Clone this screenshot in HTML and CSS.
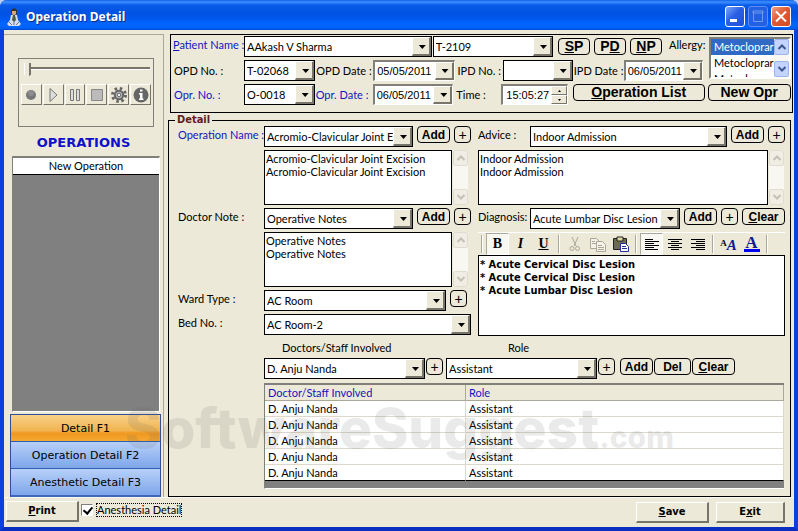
FILE: index.html
```html
<!DOCTYPE html>
<html lang="en">
<head>
<meta charset="utf-8">
<title>Operation Detail</title>
<link rel="stylesheet" href="styles.css">
</head>
<body>
<div class="window">
  <header class="titlebar">
    <svg class="app-icon" viewBox="0 0 14 18" aria-hidden="true">
      <path d="M4 2l3-2 3 2v3l-1 2H5L4 5z" fill="#3a3226"/><path d="M5 3h4v3L7 8 5 6z" fill="#d8a878"/>
      <path d="M4 7h6l1 5 3 4-2 2H2l-2-2 3-4z" fill="#d9dde6"/><path d="M6 7h2l1 5-2 2-2-2z" fill="#4f5a44"/>
      <path d="M2 14l3 3M12 14l-3 3M7 13v4" stroke="#5878a8" fill="none"/>
    </svg>
    <h1 class="title">Operation Detail</h1>
    <div class="window-buttons">
      <button class="wbtn" aria-label="Minimize"><svg viewBox="0 0 18 19"><path d="M4 12h7v3H4z" fill="#fff"/></svg></button>
      <button class="wbtn wbtn-off" aria-label="Maximize" disabled><svg viewBox="0 0 18 19"><path d="M4 4h10v2H4zM4.500 5v9.500h9V5" fill="none" stroke="#6f9af0"/></svg></button>
      <button class="wbtn wbtn-close" aria-label="Close"><svg viewBox="0 0 18 19"><path d="M4 4.500l10 10M14 4.500l-10 10" stroke="#fff" stroke-width="2"/></svg></button>
    </div>
  </header>

  <main class="body">
    <aside class="side">
      <section class="player" aria-label="Recorder">
        <input class="slider" type="range" value="0" aria-label="Position">
        <div class="player-buttons">
          <button aria-label="Record"><svg viewBox="0 0 18 18"><circle cx="9" cy="9" r="5" fill="#777"/><circle cx="9" cy="7" r="3" fill="#8e8e8e"/></svg></button>
          <button aria-label="Play"><svg viewBox="0 0 18 18"><path d="M6 2.500v13L13 9z" fill="#ddd" stroke="#777"/></svg></button>
          <button aria-label="Pause"><svg viewBox="0 0 18 18"><path d="M4.500 3.500h3v11h-3zM10.500 3.500h3v11h-3z" fill="#ddd" stroke="#777"/></svg></button>
          <button aria-label="Stop"><svg viewBox="0 0 18 18"><path d="M3.500 3.500h11v11h-11z" fill="#bbb" stroke="#888"/></svg></button>
          <button aria-label="Settings"><svg viewBox="0 0 18 18"><circle cx="9" cy="9" r="6.500" fill="none" stroke="#666" stroke-width="3" stroke-dasharray="2.500 2.605"/><circle cx="9" cy="9" r="4.200" fill="#bbb" stroke="#666" stroke-width="2"/><circle cx="9" cy="9" r="1.800" fill="#eee" stroke="#666"/></svg></button>
          <button aria-label="Information"><svg viewBox="0 0 18 18"><circle cx="9" cy="9" r="7.500" fill="#666"/><path d="M8 3.500h2.500v2H8zM7 7h3.500v5.500h1V14H7v-1.500h1V8.500H7z" fill="#fff"/></svg></button>
        </div>
      </section>
      <h2 class="side-title">OPERATIONS</h2>
      <div class="op-list"><div class="op-item">New Operation</div></div>
      <nav class="side-nav">
        <button class="nav-btn nav-active">Detail F1</button>
        <button class="nav-btn">Operation Detail F2</button>
        <button class="nav-btn">Anesthetic Detail F3</button>
      </nav>
    </aside>

    <div class="content">
      <section class="patient">
        <div class="patient-upper">
          <div class="patient-rows">
            <div class="name-row">
              <label class="blue" for="pname"><u>P</u>atient Name :</label>
              <span class="combo"><select id="pname"><option>AAkash V Sharma</option></select></span>
              <span class="combo"><select aria-label="Patient number"><option>T-2109</option></select></span>
              <div class="codes">
                <button class="rbtn big"><u>S</u>P</button>
                <button class="rbtn big">P<u>D</u></button>
                <button class="rbtn big"><u>N</u>P</button>
                <span class="allergy-label" id="allergy">Allergy:</span>
              </div>
            </div>
            <div class="field-row">
              <label for="opd">OPD No. :</label>
              <span class="combo"><select id="opd"><option>T-02068</option></select></span>
              <label for="opdd">OPD Date :</label>
              <span class="combo date"><input id="opdd" value="05/05/2011"></span>
              <label class="inset" for="ipd">IPD No. :</label>
              <span class="combo"><select id="ipd"><option></option></select></span>
              <label for="ipdd">IPD Date :</label>
              <span class="combo date"><input id="ipdd" value="06/05/2011"></span>
            </div>
          </div>
          <div class="allergies" role="listbox" aria-labelledby="allergy">
            <div class="allergy-items">
              <div class="selected" role="option" aria-selected="true">Metocloprar</div>
              <div role="option">Metocloprar</div>
              <div role="option">Metocloprar</div>
            </div>
            <div class="scroll scroll-on">
              <button aria-label="Scroll up"><svg viewBox="0 0 10 10"><path d="M1.500 7L5 3.500 8.500 7"/></svg></button>
              <button aria-label="Scroll down"><svg viewBox="0 0 10 10"><path d="M1.500 3L5 6.500 8.500 3"/></svg></button>
            </div>
          </div>
        </div>
        <div class="opr-row">
          <label class="blue" for="opr">Opr. No. :</label>
          <span class="combo"><select id="opr"><option>O-0018</option></select></span>
          <label class="blue" for="oprd">Opr. Date :</label>
          <span class="combo date"><input id="oprd" value="06/05/2011"></span>
          <label class="inset" for="time">Time :</label>
          <span class="time"><input id="time" value="15:05:27">
            <span class="spin"><button aria-label="Later"><svg viewBox="0 0 7 4"><path d="M2 3h3L3.500 1z"/></svg></button><button aria-label="Earlier"><svg viewBox="0 0 7 4"><path d="M2 1h3L3.500 3z"/></svg></button></span>
          </span>
          <div class="opr-buttons">
            <button class="rbtn big list-btn"><u>O</u>peration List</button>
            <button class="rbtn big new-btn">New Opr</button>
          </div>
        </div>
      </section>

      <fieldset class="detail">
        <legend>Detail</legend>
        <div class="halves">
          <div class="left-half">
            <label class="blue" for="opname">Operation Name :</label>
            <div class="line"><span class="combo"><select id="opname"><option>Acromio-Clavicular Joint E</option></select></span><button class="rbtn add">Add</button><button class="rbtn plus">+</button></div>
            <div class="memo">
              <textarea aria-label="Operations">Acromio-Clavicular Joint Excision
Acromio-Clavicular Joint Excision</textarea>
              <div class="scroll"><button aria-label="Scroll up"><svg viewBox="0 0 10 10"><path d="M1.500 7L5 3.500 8.500 7"/></svg></button><button aria-label="Scroll down"><svg viewBox="0 0 10 10"><path d="M1.500 3L5 6.500 8.500 3"/></svg></button></div>
            </div>
            <label for="note">Doctor Note :</label>
            <div class="line"><span class="combo"><select id="note"><option>Operative Notes</option></select></span><button class="rbtn add">Add</button><button class="rbtn plus">+</button></div>
            <div class="memo">
              <textarea aria-label="Notes">Operative Notes
Operative Notes</textarea>
              <div class="scroll"><button aria-label="Scroll up"><svg viewBox="0 0 10 10"><path d="M1.500 7L5 3.500 8.500 7"/></svg></button><button aria-label="Scroll down"><svg viewBox="0 0 10 10"><path d="M1.500 3L5 6.500 8.500 3"/></svg></button></div>
            </div>
            <label for="ward">Ward Type :</label>
            <div class="line ward"><span class="combo"><select id="ward"><option>AC Room</option></select></span><button class="rbtn plus">+</button></div>
            <label for="bed">Bed No. :</label>
            <div class="line"><span class="combo"><select id="bed"><option>AC Room-2</option></select></span></div>
          </div>

          <div class="right-half">
            <div class="line"><label for="advice">Advice :</label><span class="combo"><select id="advice"><option>Indoor Admission</option></select></span><button class="rbtn add">Add</button><button class="rbtn plus">+</button></div>
            <div class="memo memo-wide">
              <textarea aria-label="Advice given">Indoor Admission
Indoor Admission</textarea>
              <div class="scroll"><button aria-label="Scroll up"><svg viewBox="0 0 10 10"><path d="M1.500 7L5 3.500 8.500 7"/></svg></button><button aria-label="Scroll down"><svg viewBox="0 0 10 10"><path d="M1.500 3L5 6.500 8.500 3"/></svg></button></div>
            </div>
            <div class="line"><label for="diag">Diagnosis:</label><span class="combo"><select id="diag"><option>Acute Lumbar Disc Lesion</option></select></span><button class="rbtn add">Add</button><button class="rbtn plus">+</button><button class="rbtn clear"><u>C</u>lear</button></div>
            <div class="editor">
              <div class="toolbar" role="toolbar">
                <span class="sep"></span>
                <button class="tool pressed"><b>B</b></button>
                <button class="tool"><i>I</i></button>
                <button class="tool"><u>U</u></button>
                <span class="sep"></span>
                <button class="tool" aria-label="Cut"><svg viewBox="0 0 16 16" fill="none" stroke="#aca899"><path d="M5 1l4 9M11 1L7 10"/><circle cx="5" cy="12.500" r="2"/><circle cx="10.500" cy="12.500" r="2"/></svg></button>
                <button class="tool" aria-label="Copy"><svg viewBox="0 0 16 16" fill="#f4f2e8" stroke="#aca899"><path d="M.5 2.500h6l3 3v7h-9z"/><path d="M6.500 5.500h6l3 3v7h-9zM8 9.500h4M8 11.500h6M8 13.500h6M2 5.500h3M2 7.500h4"/></svg></button>
                <button class="tool" aria-label="Paste"><svg viewBox="0 0 16 16"><path d="M.5 2.500h13v11H.5z" fill="#6b6a52" stroke="#222"/><path d="M4 1h6v4H4z" fill="#ddd8a8" stroke="#222"/><path d="M7.500 7.500h5l3 3v5h-8z" fill="#fff" stroke="#22309a"/><path d="M9 10.500h4M9 12.500h5" stroke="#22309a"/></svg></button>
                <span class="sep"></span>
                <button class="tool pressed" aria-label="Align left"><svg viewBox="0 0 16 16" stroke="#000"><path d="M1 3.500h8M1 5.500h14M1 7.500h9M1 9.500h14M1 11.500h9M1 13.500h13"/></svg></button>
                <button class="tool" aria-label="Center"><svg viewBox="0 0 16 16" stroke="#000"><path d="M1 3.500h14M4 5.500h8M1 7.500h14M4 9.500h8M1 11.500h14M4 13.500h8"/></svg></button>
                <button class="tool" aria-label="Align right"><svg viewBox="0 0 16 16" stroke="#000"><path d="M1 3.500h14M6 5.500h9M1 7.500h14M6 9.500h9M1 11.500h14M6 13.500h9"/></svg></button>
                <span class="sep"></span>
                <button class="tool font-tool" aria-label="Font"><small>A</small><em>A</em></button>
                <button class="tool color-tool" aria-label="Text colour"><span>A</span></button>
                <span class="sep"></span>
              </div>
              <textarea class="diagnoses" aria-label="Diagnoses">* Acute Cervical Disc Lesion
* Acute Cervical Disc Lesion
* Acute Lumbar Disc Lesion</textarea>
            </div>
          </div>
        </div>

        <div class="staff">
          <div class="staff-pick">
            <label class="staff-label" for="doc">Doctors/Staff Involved</label>
            <label class="role-label" for="role">Role</label>
            <div class="pick"><span class="combo"><select id="doc"><option>D. Anju Nanda</option></select></span><button class="rbtn plus">+</button></div>
            <div class="pick"><span class="combo"><select id="role"><option>Assistant</option></select></span><button class="rbtn plus">+</button></div>
            <div class="pick-buttons"><button class="rbtn add">Add</button><button class="rbtn del">Del</button><button class="rbtn clear"><u>C</u>lear</button></div>
          </div>
          <div class="grid">
            <table>
              <thead><tr><th>Doctor/Staff Involved</th><th>Role</th></tr></thead>
              <tbody>
                <tr><td>D. Anju Nanda</td><td>Assistant</td></tr>
                <tr><td>D. Anju Nanda</td><td>Assistant</td></tr>
                <tr><td>D. Anju Nanda</td><td>Assistant</td></tr>
                <tr><td>D. Anju Nanda</td><td>Assistant</td></tr>
                <tr><td>D. Anju Nanda</td><td>Assistant</td></tr>
              </tbody>
            </table>
          </div>
        </div>
      </fieldset>
    </div>
  </main>

  <footer class="footer">
    <button class="xbtn"><u>P</u>rint</button>
    <input type="checkbox" class="check" id="anes" checked>
    <label class="anes" for="anes">Anesthesia Detail</label>
    <div class="footer-right">
      <button class="xbtn"><u>S</u>ave</button>
      <button class="xbtn exit">E<u>x</u>it</button>
    </div>
  </footer>
  <div class="watermark" aria-hidden="true">SoftwareSuggest<span>.com</span></div>
</div>
</body>
</html>
```
FILE: styles.css
```css
* { box-sizing: border-box; }
body {
  margin: 0;
  background: #b9cdf2;
  font: 11px/13px Lato, "Liberation Sans", sans-serif;
  color: #000;
}
button, input, select, textarea { font: inherit; color: inherit; margin: 0; border-radius: 0; }
button { padding: 0; }
h1, h2 { margin: 0; }
svg { display: block; }

.window {
  position: relative;
  min-height: 100vh;
  display: flex;
  flex-direction: column;
  background: #ece9d8;
  border: solid #0a3fe0;
  border-width: 0 4px 4px;
  border-bottom-color: #0a2fc0;
  border-radius: 7px 7px 0 0;
}
.titlebar {
  display: flex;
  align-items: center;
  height: 30px;
  margin: 0 -4px;
  padding: 3px 7px 0;
  gap: 5px;
  background: linear-gradient(#1260e8 0, #3c90ff 2px, #0a5cea 5px, #0052e0 12px, #0058f0 19px, #0066ff 24px, #0062fa 28px, #0046cc 30px);
  border-radius: 7px 7px 0 0;
}
.app-icon { width: 14px; height: 18px; }
.title {
  flex: 1;
  font: bold 12px/20px "Noto Sans", sans-serif;
  color: #fff;
  text-shadow: 1px 1px 0 #0a2f8c;
}
.window-buttons { display: flex; gap: 3px; }
.wbtn {
  width: 20px;
  height: 21px;
  border: 1px solid #fff;
  border-radius: 3px;
  background: linear-gradient(135deg, #7fa8f8, #2a5fe6 45%, #1f50d8);
}
.wbtn-off { border-color: #5f8ef0; background: #2460e4; }
.wbtn-close { background: linear-gradient(135deg, #f0a080, #e05a34 45%, #d04a24); }

.body { flex: 1; display: flex; padding-top: 4px; gap: 4px; }

.side {
  width: 160px;
  display: flex;
  flex-direction: column;
  border-top: 1px solid #aca899;
  border-right: 1px solid #aca899;
}
.player {
  margin: 23px 9px 0 14px;
  height: 69px;
  padding: 3px 2px;
  border: 1px solid #808078;
}
.slider {
  display: block;
  appearance: none;
  width: 128px;
  max-width: 100%;
  height: 17px;
  margin: 0 3px 5px;
  background: linear-gradient(#77756a, #77756a) 2px 5px / 124px 2px no-repeat, linear-gradient(#fff, #fff) 2px 7px / 125px 1px no-repeat;
}
.slider::-webkit-slider-thumb {
  appearance: none;
  width: 7px;
  height: 15px;
  background: linear-gradient(90deg, #fff 0 1px, #ece9d8 1px 5px, #77756a 5px);
  clip-path: polygon(0 0, 100% 0, 100% 75%, 50% 100%, 0 75%);
}
.player-buttons { display: flex; gap: 1px; }
.player-buttons button {
  flex: 1;
  height: 21px;
  background: #ece9d8;
  border: 1px solid;
  border-color: #fff #77756a #77756a #fff;
}
.player-buttons svg { width: 18px; height: 18px; margin: auto; }
.side-title {
  margin: 7px 0 5px;
  font: bold 13px/17px "DejaVu Sans", sans-serif;
  color: #1010c8;
  text-align: center;
}
.op-list {
  flex: 1;
  margin: 0 3px 2px 8px;
  background: #808080;
  border: 1px solid;
  border-color: #808078 #fff #fff #808078;
  border-top-width: 2px;
}
.op-item { background: #fff; border-bottom: 1px solid #000; text-align: center; line-height: 16px; }
.side-nav {
  display: flex;
  flex-direction: column;
  margin: 0 2px 0 6px;
  border: 1px solid #2f4f98;
  border-bottom: 2px solid #3f68b8;
}
.nav-btn {
  height: 26px;
  border: 0;
  font: 11px/13px "DejaVu Sans", sans-serif;
  background: linear-gradient(#b8d0f8, #7ea6ea);
}
.nav-btn + .nav-btn { border-top: 1px solid #2f5fb0; height: 27px; }
.nav-active { background: linear-gradient(#f8d088, #f0b450 60%, #f09820 70%, #f4a830); }

.content { flex: 1; min-width: 0; display: flex; flex-direction: column; padding-right: 1px; }
.patient {
  margin-left: 2px;
  border: 1px solid #000;
  padding: 1px 1px 7px 2px;
}
.patient-upper { display: flex; gap: 3px; }
.patient-rows { flex: 1; min-width: 0; }
.patient label, .left-half > label, .line label { line-height: 17px; white-space: nowrap; }
.blue { color: #1414c0; }
.name-row { display: grid; grid-template-columns: 71px 187fr 120fr 152px; height: 24px; }
.name-row .combo { margin-right: 1px; }
.codes { display: flex; gap: 4px; padding: 2px 0 0 4px; align-items: flex-start; }
.codes .rbtn { flex: none; width: 32px; }
.allergy-label { margin-left: 3px; }
.field-row { display: grid; grid-template-columns: 71px minmax(0, 71fr) 58px minmax(0, 84fr) 45px minmax(0, 70fr) 51px minmax(0, 82fr); height: 24px; align-items: start; }
.opr-row { display: grid; grid-template-columns: 71px minmax(0, 71fr) 58px minmax(0, 84fr) 45px minmax(0, 70fr) 220px; align-items: start; }
.field-row label, .opr-row label { padding: 2px 0 0 1px; }
.patient .inset { padding-left: 0; }
.opr-buttons { display: flex; gap: 3px; padding-left: 2px; }
.opr-buttons .list-btn { flex: 132 1 0; min-width: 0; }
.opr-buttons .new-btn { flex: 83 1 0; min-width: 0; }

.combo {
  position: relative;
  display: block;
  flex: 1;
  min-width: 0;
  height: 21px;
  background: #fff;
  border: 1px solid #000;
}
.combo select, .combo input {
  display: block;
  appearance: none;
  width: 100%;
  height: 19px;
  padding: 0 16px 0 2px;
  border: 0;
  background: none;
}
.combo::after {
  content: "";
  position: absolute;
  top: 0;
  right: 0;
  bottom: 0;
  width: 16px;
  background: #ece9d8;
  border: solid;
  border-width: 1px 2px 2px 1px;
  border-color: #fff #77756a #77756a #fff;
  pointer-events: none;
}
.combo::before {
  content: "";
  position: absolute;
  z-index: 1;
  top: 8px;
  right: 5px;
  width: 7px;
  height: 4px;
  background: #000;
  clip-path: polygon(0 0, 100% 0, 50% 100%);
  pointer-events: none;
}
.combo.date, .time {
  height: 21px;
  margin-right: 3px;
  border: solid;
  border-width: 2px 1px 1px 2px;
  border-color: #808078 #fff #fff #808078;
}
.combo.date input, .time input { font-family: "Liberation Sans", sans-serif; height: 18px; }
.combo.date::before { top: 7px; }
.time { display: flex; background: #fff; }
.time input { flex: 1; min-width: 0; border: 0; padding: 0 0 0 3px; background: none; }
.spin { display: flex; flex-direction: column; width: 16px; }
.spin button { flex: 1; background: #ece9d8; border: 1px solid; border-color: #fff #77756a #77756a #fff; }
.spin svg { width: 7px; height: 4px; margin: auto; }

.rbtn {
  height: 17px;
  flex: none;
  background: #ece9d8;
  border: 1px solid #000;
  border-radius: 4px;
  font: bold 12px/14px "Liberation Sans", sans-serif;
}
.big { font-size: 14px; line-height: 15px; }
.add { width: 33px; }
.plus { width: 17px; font-weight: normal; font-size: 14px; }
.del { width: 37px; }
.clear { width: 43px; }

.allergies { display: flex; width: 82px; height: 42px; margin-top: 1px; background: #fff; border: 2px solid; border-color: #808078 #fff #fff #808078; overflow: hidden; }
.allergy-items { flex: 1; min-width: 0; overflow: hidden; line-height: 16px; padding-left: 0; }
.allergy-items div { padding-left: 3px; }
.selected { background: #316ac5; color: #fff; }

.scroll { display: flex; flex-direction: column; justify-content: space-between; flex: none; width: 15px; background: #f8f7f2; }
.scroll button { height: 16px; background: #f0eee4; border: 1px solid #e0ddd0; border-radius: 2px; }
.scroll svg { width: 10px; height: 10px; margin: auto; fill: none; stroke: #c4c1b4; stroke-width: 2; }
.scroll-on button { background: #c4d4fc; border-color: #9cb4ec; }
.scroll-on svg { stroke: #3c5890; }

.detail { flex: 1; margin: 1px 2px 0 0; min-width: 0; padding: 0 5px 7px 9px; border: 1px solid #000; }
.detail legend { margin-left: -3px; padding: 0 2px; font: bold 11px/12px "DejaVu Sans Condensed", "DejaVu Sans", sans-serif; color: #641c1c; }
.halves { display: flex; gap: 7px; }
.left-half { flex: 293 1 0; min-width: 0; display: grid; grid-template-columns: 86px 1fr; gap: 3px 0; align-content: start; }
.right-half { flex: 307 1 0; min-width: 0; display: flex; flex-direction: column; gap: 3px; }
.line { display: flex; gap: 4px; align-items: flex-start; min-width: 0; }
.left-half .line, .left-half .memo { grid-column: 2; }
.ward { padding-right: 4px; }
.right-half .line label { width: 48px; }
.memo { display: flex; height: 55px; padding-right: 3px; gap: 1px; }
.memo-wide { padding-right: 1px; }
.memo textarea, .diagnoses { flex: 1; min-width: 0; resize: none; padding: 1px; border: 1px solid #000; background: #fff; overflow: hidden; line-height: 13px; }

.editor { display: flex; flex-direction: column; }
.toolbar { display: flex; height: 23px; border-top: 1px solid #fff; align-items: stretch; }
.sep { width: 2px; margin: 2px 3px; border-left: 1px solid #aca899; border-right: 1px solid #fff; }
.tool { flex: none; width: 23px; border: 1px solid transparent; background: none; font: bold 14px/18px "Liberation Serif", serif; }
.tool svg { width: 16px; height: 16px; margin: auto; }
.pressed { background: #f8f7f2; border-color: #aca899 #fff #fff #aca899; }
.font-tool { color: #101a90; }
.font-tool small { font-size: 9px; vertical-align: 4px; color: #000; }
.font-tool em { font-size: 15px; }
.color-tool span { display: block; width: 16px; margin: auto; font-size: 17px; line-height: 13px; color: #101a90; border-bottom: 3px solid #0000f0; }
.diagnoses { height: 81px; flex: none; padding-top: 2px; font: bold 11px/13px "DejaVu Sans Condensed", "DejaVu Sans", sans-serif; }

.staff { margin: 5px 1px 0 86px; }
.staff-pick { display: grid; grid-template-columns: 179fr 169fr 166px; column-gap: 3px; row-gap: 4px; }
.staff-label { padding-left: 18px; }
.role-label { padding-left: 62px; grid-column: 2 / 4; }
.pick { display: flex; gap: 1px; }
.pick-buttons { display: flex; gap: 1px; padding-left: 2px; }
.grid { margin-top: 4px; padding-bottom: 7px; background: #808080; border: solid; border-width: 2px 0 1px 1px; border-color: #808078 #fff #fff #808078; }
.grid table { width: 100%; border-collapse: separate; border-spacing: 0; table-layout: fixed; background: #fff; }
.grid th, .grid td { height: 16px; padding: 0 3px; line-height: 15px; text-align: left; font-weight: normal; border-right: 1px solid #dcd9cc; border-bottom: 1px solid #dcd9cc; }
.grid th { background: #ece9d8; color: #1414c0; border-color: #aca899; }
.grid th:first-child { width: 201px; }
.grid tbody tr:last-child td { border-bottom-color: #000; }

.footer { display: flex; align-items: flex-start; padding: 3px 9px 4px 2px; border-top: 1px solid #f8f7f0; }
.xbtn { width: 73px; height: 21px; background: #ece9d8; border: solid; border-width: 1px 2px 2px 1px; border-color: #fff #77756a #77756a #fff; font: bold 11px/14px "DejaVu Sans Condensed", "DejaVu Sans", sans-serif; }
.exit { width: 69px; }
.check { appearance: none; width: 12px; height: 12px; margin: 3px 4px 0 2px; background: #fff; border: 1px solid; border-color: #808078 #fff #fff #808078; }
.check:checked::before { content: ""; display: block; width: 4px; height: 7px; margin: 0 3px; border: solid #000; border-width: 0 2px 2px 0; transform: rotate(40deg); }
.anes { margin-top: 3px; line-height: 12px; outline: 1px dotted #000; }
.footer-right { display: flex; gap: 7px; margin: 1px 0 0 auto; }

.watermark { position: absolute; left: 121px; bottom: 60px; font: 800 55px/60px Inter, sans-serif; color: rgba(90, 90, 90, .13); pointer-events: none; white-space: nowrap; }
.watermark span { font-size: 30px; }
```
